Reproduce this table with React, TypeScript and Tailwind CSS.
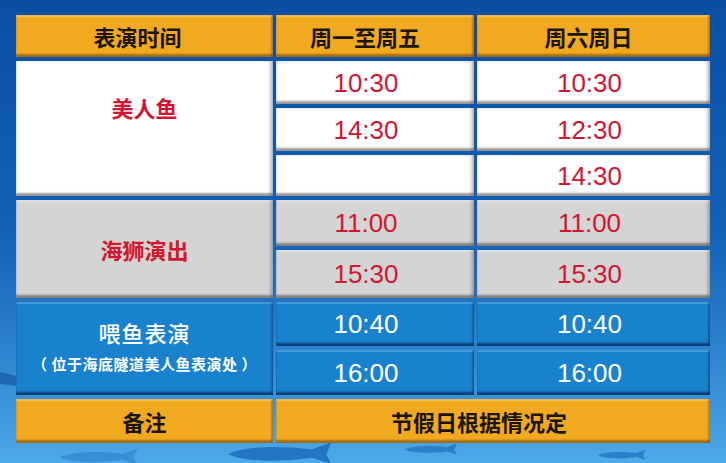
import React from "react";

const cjk = "font-['Noto_Sans_CJK_SC','Noto_Sans',sans-serif]";
const num = "font-['Liberation_Sans',Arial,sans-serif]";

const shOrange =
  "shadow-[inset_0_-3px_2px_rgba(110,60,10,0.55),inset_-2px_0_2px_rgba(110,60,10,0.35),inset_0_2px_1px_rgba(255,225,150,0.5)]";
const shWhite =
  "shadow-[inset_0_-3px_2px_rgba(90,80,75,0.55),inset_-3px_0_3px_rgba(0,0,0,0.22)]";
const shGray =
  "shadow-[inset_0_-3px_2px_rgba(90,80,75,0.6),inset_-3px_0_3px_rgba(0,0,0,0.18),inset_0_2px_1px_rgba(255,255,255,0.5)]";
const shBlue =
  "shadow-[inset_0_-3px_2px_rgba(5,30,70,0.65),inset_-2px_0_2px_rgba(5,30,70,0.3),inset_0_2px_1px_rgba(140,200,250,0.45)]";

function Time({ t, cls, pr }: { t: string; cls: string; pr: string }) {
  return (
    <div className={`flex items-center justify-center ${cls} ${pr}`}>
      <span className={`${num} text-[26px] leading-none`}>{t}</span>
    </div>
  );
}

function Fish({ x, y, s, o }: { x: number; y: number; s: number; o: number }) {
  return (
    <path
      transform={`translate(${x} ${y}) scale(${s})`}
      d="M0 6 C 10 0, 40 -2, 70 2 L 86 -4 L 82 6 L 86 14 L 70 9 C 40 13, 12 12, 0 6 Z"
      fill="#1566b8"
      opacity={o}
    />
  );
}

export default function App() {
  const white = `bg-white text-[#d3152f] ${shWhite}`;
  const gray = `bg-[#d4d4d4] text-[#d3152f] ${shGray}`;
  const blue = `bg-[#1982cf] text-white ${shBlue}`;
  const orange = `bg-[#f1aa1f] text-[#1b1408] ${shOrange}`;

  return (
    <div className="relative w-[726px] h-[463px] overflow-hidden bg-gradient-to-b from-[#0a4ea2] via-[#1262b8] to-[#3a9be1]">
      <svg
        className="absolute left-0 top-0"
        width="726"
        height="463"
        viewBox="0 0 726 463"
      >
        <defs>
          <linearGradient id="side" x1="0" y1="0" x2="0" y2="1">
            <stop offset="0" stopColor="#0a4c9f" stopOpacity="0" />
            <stop offset="1" stopColor="#5ab4ee" stopOpacity="0.6" />
          </linearGradient>
        </defs>
        <rect x="0" y="180" width="726" height="283" fill="url(#side)" />
        <path d="M0 372 C 20 376, 35 382, 50 392 C 30 388, 14 385, 0 384 Z" fill="#0d4f9a" opacity="0.6" />
        <Fish x={228} y={447} s={1.2} o={0.75} />
        <Fish x={405} y={446} s={0.6} o={0.6} />
        <Fish x={598} y={452} s={0.55} o={0.6} />
        <Fish x={60} y={452} s={0.9} o={0.35} />
      </svg>

      <div className="relative pt-[15px] pl-[16px]">
        <div className="grid grid-cols-[257px_198px_233px] grid-rows-[42px_43px_43px_41px_46px_48px_44px_45px_44px] gap-x-[3px] gap-y-[4px]">
          {/* header */}
          <div className={`flex items-center justify-center pr-[14px] ${orange}`}>
            <span className={`${cjk} text-[22px] font-bold leading-none`}>表演时间</span>
          </div>
          <div className={`flex items-center justify-center pr-[20px] ${orange}`}>
            <span className={`${cjk} text-[22px] font-bold leading-none`}>周一至周五</span>
          </div>
          <div className={`flex items-center justify-center pr-[10px] ${orange}`}>
            <span className={`${cjk} text-[22px] font-bold leading-none`}>周六周日</span>
          </div>

          {/* mermaid */}
          <div className={`row-span-3 flex items-start justify-center pt-[35px] ${white}`}>
            <span className={`${cjk} text-[22px] font-bold leading-none`}>美人鱼</span>
          </div>
          <Time t="10:30" cls={white} pr="pr-[18px]" />
          <Time t="10:30" cls={white} pr="pr-[8px]" />
          <Time t="14:30" cls={white} pr="pr-[18px]" />
          <Time t="12:30" cls={white} pr="pr-[8px]" />
          <div className={white} />
          <Time t="14:30" cls={white} pr="pr-[8px]" />

          {/* sea lion */}
          <div className={`row-span-2 flex items-center justify-center ${gray}`}>
            <span className={`${cjk} text-[22px] font-bold leading-none`}>海狮演出</span>
          </div>
          <Time t="11:00" cls={gray} pr="pr-[18px]" />
          <Time t="11:00" cls={gray} pr="pr-[8px]" />
          <Time t="15:30" cls={gray} pr="pr-[18px]" />
          <Time t="15:30" cls={gray} pr="pr-[8px]" />

          {/* feeding */}
          <div className={`row-span-2 flex flex-col items-center justify-center gap-[13px] pb-[6px] ${blue}`}>
            <span className={`${cjk} text-[22px] font-medium leading-none tracking-[1px]`}>喂鱼表演</span>
            <span className={`${cjk} text-[15px] font-bold leading-none tracking-[0.5px]`}>（ 位于海底隧道美人鱼表演处 ）</span>
          </div>
          <Time t="10:40" cls={blue} pr="pr-[18px]" />
          <Time t="10:40" cls={blue} pr="pr-[8px]" />
          <Time t="16:00" cls={blue} pr="pr-[18px]" />
          <Time t="16:00" cls={blue} pr="pr-[8px]" />

          {/* footer */}
          <div className={`flex items-center justify-center ${orange}`}>
            <span className={`${cjk} text-[22px] font-bold leading-none`}>备注</span>
          </div>
          <div className={`col-span-2 flex items-center justify-center pr-[28px] ${orange}`}>
            <span className={`${cjk} text-[22px] font-bold leading-none`}>节假日根据情况定</span>
          </div>
        </div>
      </div>
    </div>
  );
}
